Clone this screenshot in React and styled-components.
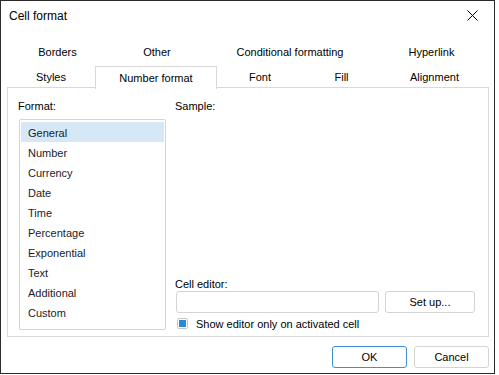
import styled, { createGlobalStyle } from "styled-components";

const GlobalStyle = createGlobalStyle`
    html, body {
        margin: 0;
        padding: 0;
        background: #ffffff;
    }
    body {
        font-family: "Liberation Sans", Arial, sans-serif;
        font-size: 11px;
        color: #000000;
    }
`;

const topTabs = [
    { label: "Borders", width: 101 },
    { label: "Other", width: 98 },
    { label: "Conditional formatting", width: 168 },
    { label: "Hyperlink", width: 115 },
];

const bottomTabs = [
    { label: "Styles", width: 88 },
    { label: "Number format", width: 122, active: true },
    { label: "Font", width: 86 },
    { label: "Fill", width: 77 },
    { label: "Alignment", width: 109 },
];

const formats = [
    "General",
    "Number",
    "Currency",
    "Date",
    "Time",
    "Percentage",
    "Exponential",
    "Text",
    "Additional",
    "Custom",
];

function CloseIcon() {
    return (
        <svg width="11" height="11" viewBox="0 0 11 11">
            <path d="M0.5 0.5 L10.5 10.5 M10.5 0.5 L0.5 10.5" stroke="#000" strokeWidth="1" fill="none" />
        </svg>
    );
}

function App() {
    return (
        <>
            <GlobalStyle />
            <Window>
                <TitleBar>
                    <span>Cell format</span>
                    <CloseButton>
                        <CloseIcon />
                    </CloseButton>
                </TitleBar>

                <TabRow $height={24}>
                    {topTabs.map((t) => (
                        <Tab key={t.label} $width={t.width}>
                            {t.label}
                        </Tab>
                    ))}
                </TabRow>
                <TabRow $height={22} $last>
                    {bottomTabs.map((t) => (
                        <Tab key={t.label} $width={t.width} $active={t.active}>
                            {t.label}
                        </Tab>
                    ))}
                </TabRow>

                <Panel>
                    <LeftColumn>
                        <Label>Format:</Label>
                        <ListBox>
                            {formats.map((f, i) => (
                                <ListItem key={f} $selected={i === 0}>
                                    {f}
                                </ListItem>
                            ))}
                        </ListBox>
                    </LeftColumn>
                    <RightColumn>
                        <Label>Sample:</Label>
                        <Spacer />
                        <Label>Cell editor:</Label>
                        <EditorRow>
                            <TextInput />
                            <Button $width={90}>Set up...</Button>
                        </EditorRow>
                        <CheckRow>
                            <CheckBox>
                                <CheckMark />
                            </CheckBox>
                            <span>Show editor only on activated cell</span>
                        </CheckRow>
                    </RightColumn>
                </Panel>

                <Footer>
                    <Button $width={75} $primary>
                        OK
                    </Button>
                    <Button $width={75}>Cancel</Button>
                </Footer>
            </Window>
        </>
    );
}

const Window = styled.div`
    width: 495px;
    height: 374px;
    box-sizing: border-box;
    border: 1px solid #2b2b2b;
    background: #ffffff;
    display: flex;
    flex-direction: column;
`;

const TitleBar = styled.div`
    height: 29px;
    display: flex;
    align-items: center;
    justify-content: space-between;
    padding: 0 0 0 8px;
    font-size: 12px;
    margin-bottom: 10px;
`;

const CloseButton = styled.div`
    width: 46px;
    height: 29px;
    display: flex;
    align-items: center;
    justify-content: center;
    margin-right: -1px;
`;

const TabRow = styled.div`
    display: flex;
    height: ${(p) => p.$height}px;
    margin: 0 5px 0 6px;
    margin-bottom: ${(p) => (p.$last ? "-1px" : "2px")};
    position: relative;
    z-index: 1;
`;

const Tab = styled.div`
    width: ${(p) => p.$width}px;
    box-sizing: border-box;
    display: flex;
    align-items: center;
    justify-content: center;
    padding-bottom: 1px;
    color: #000000;
    background: ${(p) => (p.$active ? "#ffffff" : "transparent")};
    border: 1px solid ${(p) => (p.$active ? "#d9d9d9" : "transparent")};
    border-bottom: none;
    height: ${(p) => (p.$active ? "calc(100% + 1px)" : "100%")};
`;

const Panel = styled.div`
    margin: 0 5px 0 6px;
    height: 250px;
    box-sizing: border-box;
    border: 1px solid #d9d9d9;
    display: flex;
    padding: 9px 13px 6px 10px;
    gap: 9px;
`;

const LeftColumn = styled.div`
    width: 148px;
    display: flex;
    flex-direction: column;
    gap: 6px;
`;

const Label = styled.div`
    line-height: 18px;
    height: 16px;
`;

const ListBox = styled.div`
    flex: 1;
    margin-left: 1px;
    border: 1px solid #d4d4d4;
    border-radius: 2px;
    padding: 2px 1px;
    display: flex;
    flex-direction: column;
`;

const ListItem = styled.div`
    height: 20px;
    box-sizing: border-box;
    padding: 2px 0 0 7px;
    display: flex;
    align-items: center;
    color: #1a1a2a;
    background: ${(p) => (p.$selected ? "#d6e7f5" : "transparent")};
`;

const RightColumn = styled.div`
    flex: 1;
    display: flex;
    flex-direction: column;
`;

const Spacer = styled.div`
    flex: 1;
`;

const EditorRow = styled.div`
    display: flex;
    gap: 6px;
    padding-left: 1px;
`;

const TextInput = styled.div`
    flex: 1;
    height: 22px;
    box-sizing: border-box;
    border: 1px solid #d4d4d4;
    border-radius: 3px;
    background: #ffffff;
`;

const Button = styled.div`
    width: ${(p) => p.$width}px;
    height: 22px;
    box-sizing: border-box;
    display: flex;
    align-items: center;
    justify-content: center;
    border: 1px solid ${(p) => (p.$primary ? "#3d8fd8" : "#d4d4d4")};
    border-radius: 3px;
    background: #ffffff;
    color: #000000;
`;

const CheckRow = styled.div`
    display: flex;
    align-items: center;
    gap: 8px;
    margin-top: 4px;
    padding-left: 2px;
    height: 13px;
`;

const CheckBox = styled.div`
    width: 11px;
    height: 11px;
    box-sizing: border-box;
    border: 1px solid #c6c6c6;
    border-radius: 2px;
    display: flex;
    align-items: center;
    justify-content: center;
`;

const CheckMark = styled.div`
    width: 7px;
    height: 7px;
    background: #2b8ad6;
`;

const Footer = styled.div`
    display: flex;
    justify-content: flex-end;
    gap: 7px;
    padding: 9px 5px 0 0;
`;

export default App;
